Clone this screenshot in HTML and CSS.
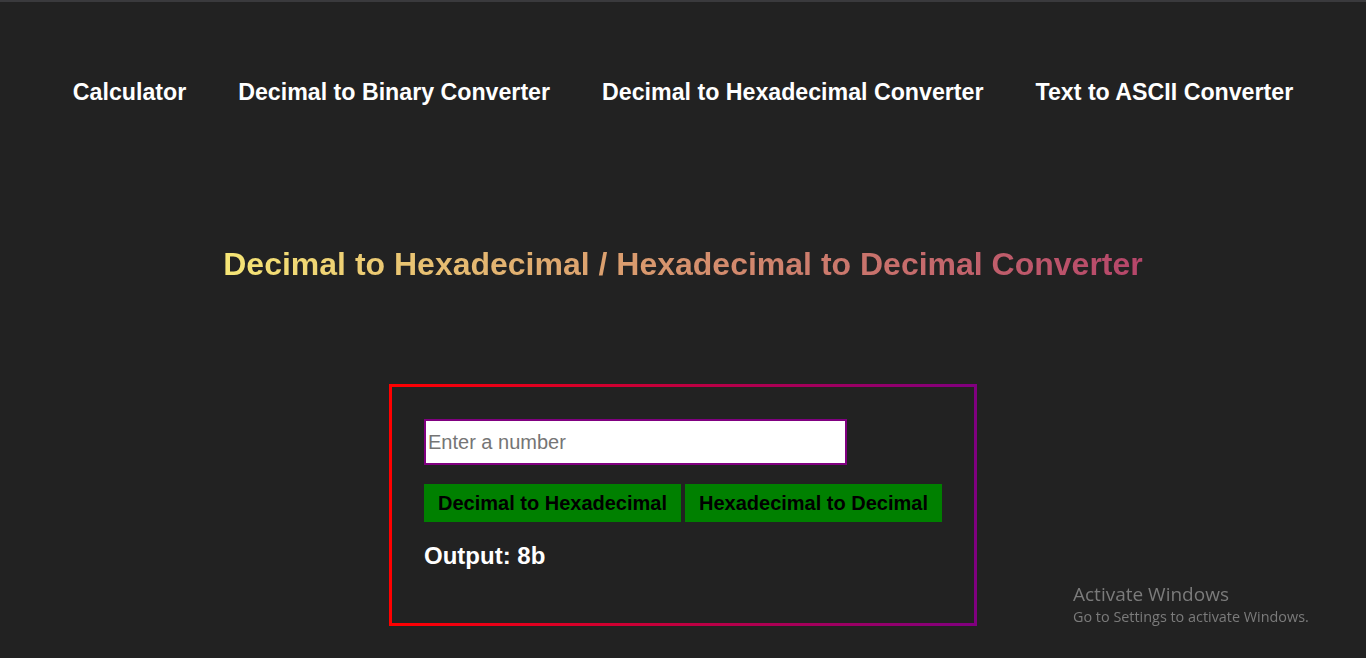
FILE: index.html
```html
<!DOCTYPE html>
<html lang="en">
<head>
<meta charset="utf-8">
<title>Decimal to Hexadecimal Converter</title>
<link rel="stylesheet" href="styles.css">
</head>
<body>
  <nav class="nav">
    <a class="nav-link" href="#">Calculator</a>
    <a class="nav-link" href="#">Decimal to Binary Converter</a>
    <a class="nav-link" href="#">Decimal to Hexadecimal Converter</a>
    <a class="nav-link" href="#">Text to ASCII Converter</a>
  </nav>
  <h1 class="title"><span class="title-text">Decimal to Hexadecimal / Hexadecimal to Decimal Converter</span></h1>
  <main class="box">
    <input class="number-input" type="text" placeholder="Enter a number">
    <div class="actions">
      <button class="btn">Decimal to Hexadecimal</button>
      <button class="btn">Hexadecimal to Decimal</button>
    </div>
    <h3 class="output">Output: 8b</h3>
  </main>
  <div class="watermark">
    <div class="wm-title">Activate Windows</div>
    <div class="wm-sub">Go to Settings to activate Windows.</div>
  </div>
</body>
</html>
```
FILE: styles.css
```css
html, body {
  margin: 0;
  padding: 0;
}
body {
  background: #222222;
  border-top: 2px solid #3a3a3d;
  font-family: "Liberation Sans", Arial, sans-serif;
  color: #ffffff;
  min-height: 656px;
}
.nav {
  display: flex;
  justify-content: center;
  gap: 52px;
  padding-top: 77px;
}
.nav-link {
  color: #ffffff;
  text-decoration: none;
  font-weight: bold;
  font-size: 23.2px;
  line-height: 26px;
}
.title {
  margin: 141px 0 0;
  text-align: center;
  font-size: 32px;
  line-height: 36px;
  font-weight: bold;
}
.title-text {
  background: linear-gradient(to right, #f6e676, #d99a6e 45%, #b6456a);
  -webkit-background-clip: text;
  background-clip: text;
  color: transparent;
}
.box {
  display: block;
  width: fit-content;
  margin: 102px auto 0;
  padding: 32px;
  border: 3px solid;
  border-image: linear-gradient(to right, #ff0000, #800080) 1;
}
.number-input {
  display: block;
  box-sizing: border-box;
  width: 423px;
  height: 46px;
  margin: 0;
  padding: 0 2px;
  border: 2px solid #800080;
  background: #ffffff;
  font-family: "Liberation Sans", Arial, sans-serif;
  font-size: 20px;
  color: #000;
  outline: none;
}
.number-input::placeholder {
  color: #757575;
}
.actions {
  display: flex;
  gap: 4px;
  margin-top: 19px;
}
.btn {
  background: #008000;
  color: #000000;
  border: 0;
  padding: 7px 14px;
  font-family: "Liberation Sans", Arial, sans-serif;
  font-weight: bold;
  font-size: 20px;
  line-height: 24px;
  cursor: pointer;
}
.output {
  margin: 20px 0 21px;
  font-size: 24px;
  font-weight: bold;
  color: #ffffff;
}
.watermark {
  position: fixed;
  left: 1073px;
  top: 582px;
  color: #7b7b7b;
  font-family: "Open Sans", "Noto Sans", sans-serif;
}
.wm-title {
  font-size: 19px;
  line-height: 24px;
}
.wm-sub {
  font-size: 14.4px;
  line-height: 21px;
}
```
